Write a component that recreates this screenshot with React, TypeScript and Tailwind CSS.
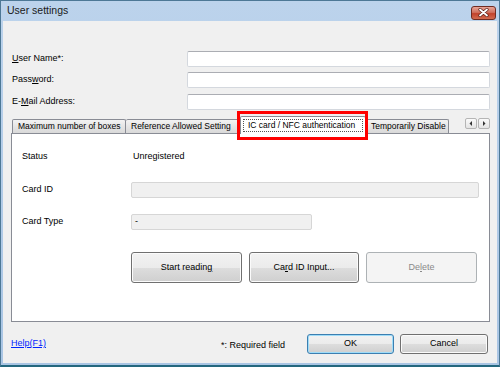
const FONT = "font-['Liberation_Sans',Arial,sans-serif]";

function Field({ className = "" }: { className?: string }) {
  return (
    <div
      className={
        "h-[16px] rounded-[2px] border border-[#d4d8de] border-t-[#abadb3] bg-white " +
        className
      }
    />
  );
}

function Btn({
  children,
  kind = "normal",
  className = "",
}: {
  children: React.ReactNode;
  kind?: "normal" | "default" | "disabled";
  className?: string;
}) {
  const look =
    kind === "disabled"
      ? "border-[#adb2b5] bg-[#f4f4f4] text-[#8a8a8a]"
      : kind === "default"
        ? "border-[#3c7fb1] bg-[linear-gradient(#f2f2f2_0%,#ebebeb_50%,#dddddd_51%,#cfcfcf_100%)] shadow-[inset_0_0_0_1px_#9fdcf8] text-black"
        : "border-[#707070] bg-[linear-gradient(#f2f2f2_0%,#ebebeb_50%,#dddddd_51%,#cfcfcf_100%)] shadow-[inset_0_0_0_1px_#fbfbfb] text-black";
  return (
    <button
      type="button"
      className={
        "flex items-center justify-center rounded-[3px] border text-[9px] " +
        look +
        " " +
        className
      }
    >
      {children}
    </button>
  );
}

function Tab({ label, className = "" }: { label: string; className?: string }) {
  return (
    <div
      className={
        "flex h-[14px] items-center whitespace-nowrap rounded-t-[2px] border border-b-0 border-[#898c95] bg-[linear-gradient(#f3f3f3,#e5e5e5_50%,#d9d9d9)] pl-[5px] text-[8.5px] text-black " +
        className
      }
    >
      {label}
    </div>
  );
}

function Arrow({ dir }: { dir: "l" | "r" }) {
  return (
    <div className="flex h-[11px] w-[12px] items-center justify-center rounded-[2px] border border-[#b5b5b5] bg-[linear-gradient(#fafafa,#e4e4e4)]">
      <svg width="4" height="5" viewBox="0 0 4 5" aria-hidden>
        {dir === "l" ? (
          <path d="M3 0 L0.5 2.5 L3 5 Z" fill="#333" />
        ) : (
          <path d="M1 0 L3.5 2.5 L1 5 Z" fill="#333" />
        )}
      </svg>
    </div>
  );
}

export default function App() {
  return (
    <div
      className={
        "relative flex h-[367px] w-[500px] flex-col border border-b-2 border-[#4d7896] border-b-[#24687f] bg-[linear-gradient(#bcd3ec,#a9c5e4)] " +
        FONT
      }
    >
      {/* title bar */}
      <div className="flex h-[20px] items-center justify-between pl-[6px] pr-[3px]">
        <span className="text-[10.5px] text-[#1a1a1a]">User settings</span>
        <div className="mt-[3px] flex h-[14px] w-[25px] items-center justify-center rounded-[3px] border border-[#6f2b22] bg-[linear-gradient(#e8a597,#d0705e_45%,#c2422c_55%,#d26a4f)]">
          <svg width="11" height="9" viewBox="0 0 11 9" aria-hidden>
            <path d="M2 1.5 L9 7.5 M9 1.5 L2 7.5" stroke="#5a2019" strokeWidth="3.2" strokeLinecap="round" />
            <path d="M2 1.5 L9 7.5 M9 1.5 L2 7.5" stroke="#ffffff" strokeWidth="1.8" strokeLinecap="round" />
          </svg>
        </div>
      </div>

      {/* client area */}
      <div className="mb-[2px] ml-[2px] mr-[2px] flex flex-1 flex-col bg-[#f0f0f0] pl-[8px] pr-[7px] pt-[30px] text-[9px] text-black">
        <div className="grid grid-cols-[176px_1fr] items-center">
          <span className="pl-[1px]">
            <u className="underline">U</u>ser Name*:
          </span>
          <Field />
        </div>
        <div className="mt-[5px] grid grid-cols-[176px_1fr] items-center">
          <span className="pl-[1px]">
            Pass<u className="underline">w</u>ord:
          </span>
          <Field />
        </div>
        <div className="mt-[6px] grid grid-cols-[176px_1fr] items-center">
          <span className="pl-[1px]">
            E-<u className="underline">M</u>ail Address:
          </span>
          <Field />
        </div>

        {/* tab strip */}
        <div className="relative z-10 mt-[6px] flex h-[17px] items-end pl-[1px]">
          <Tab label="Maximum number of boxes" className="w-[114px]" />
          <Tab label="Reference Allowed Setting" className="w-[114px] border-l-0" />
          <div className="-mb-px flex h-[18px] w-[126px] items-start rounded-t-[2px] border border-b-0 border-[#898c95] bg-white px-[2px] pt-[2px]">
            <span className="flex h-[13px] w-full items-center whitespace-nowrap border border-dotted border-[#555] pl-[4px] text-[8.5px]">
              IC card / NFC authentication
            </span>
          </div>
          <Tab label="Temporarily Disable" className="w-[83px] border-l-0 pl-[3px]" />
          <div className="mb-[4px] ml-auto flex gap-px">
            <Arrow dir="l" />
            <Arrow dir="r" />
          </div>
        </div>

        {/* tab panel */}
        <div className="flex h-[189px] flex-col border border-[#898c95] bg-white pl-[10px] pr-[10px] pt-[15px]">
          <div className="grid h-[16px] grid-cols-[109px_1fr] items-center">
            <span>Status</span>
            <span className="pl-[2px]">Unregistered</span>
          </div>
          <div className="mt-[17px] grid grid-cols-[109px_1fr] items-center">
            <span>Card ID</span>
            <div className="h-[16px] rounded-[2px] border border-[#d6d6d6] bg-[#f0f0f0]" />
          </div>
          <div className="mt-[16px] grid grid-cols-[109px_181px] items-center">
            <span>Card Type</span>
            <div className="flex h-[16px] items-center rounded-[2px] border border-[#d6d6d6] bg-[#f0f0f0] pl-[3px]">
              -
            </div>
          </div>
          <div className="ml-[109px] mt-[22px] flex gap-[7px]">
            <Btn className="h-[31px] w-[111px]">
              Start readin<u className="underline">g</u>
            </Btn>
            <Btn className="h-[31px] w-[110px]">
              Ca<u className="underline">r</u>d ID Input...
            </Btn>
            <Btn kind="disabled" className="h-[31px] w-[111px]">
              De<u className="underline">l</u>ete
            </Btn>
          </div>
        </div>

        {/* footer */}
        <div className="mt-[12px] flex h-[20px] items-center pr-[2px]">
          <a className="cursor-pointer text-[#0026ff] underline">Help(F1)</a>
          <span className="ml-auto mr-[22px] mt-[4px]">*: Required field</span>
          <Btn kind="default" className="h-[20px] w-[87px]">
            OK
          </Btn>
          <Btn className="ml-[6px] h-[20px] w-[88px]">Cancel</Btn>
        </div>
      </div>

      {/* red highlight annotation */}
      <div className="pointer-events-none absolute left-[236px] top-[110px] z-20 h-[29px] w-[131px] border-[3px] border-[#ff0000]" />
    </div>
  );
}
